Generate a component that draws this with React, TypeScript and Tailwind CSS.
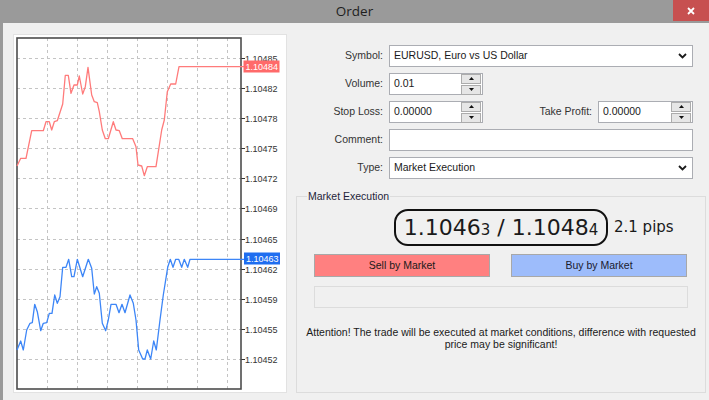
import React from 'react';

const UI_FONT = "font-['Liberation_Sans',Arial,sans-serif]";

const RED_POINTS =
	'17,166 20.7,158.3 26,158.3 31.7,130.7 43.3,130.7 46,121.7 49.3,121.7 51.7,130 54.3,121.7 57.3,120.7 62.7,104 65.3,75.3 68.3,75.3 71,93.3 74,85 77.3,85 79.3,76 82.7,94 85.3,86.7 88,67.3 91.7,95 94.3,101.7 97.3,102.7 99.3,111.7 102.3,130 105.3,138.7 108.3,138.7 113.3,121.7 116,130 119.3,130.7 122.3,138.7 132.7,138.7 136,146.7 138,165 141.7,166 144.3,175.7 147.3,166.7 156,166.7 161.7,130 164.3,120 167.3,91.7 170.7,84 175.7,84 179,66.7 244,66.7';

const BLUE_POINTS =
	'17,350 20.7,341 23.3,350 26.7,330 30,323.3 32.3,322.7 34.7,304.3 37.3,311.7 40.7,330.7 43.3,323.3 46.7,322.7 49.3,313.3 52,313.3 54.7,295 57.3,303.3 60,296.7 62.7,267.3 66,267.3 68.7,259.3 71.7,276.7 74,276.7 77.3,259.3 82.7,276.7 88.3,259.3 91.7,268.3 94.3,294 96.7,286.7 99.3,293.3 102.3,323.3 105.7,330.7 108.3,320 111,304.3 116,304.3 119,312.7 122,304.3 125,312.7 130,295 133.3,303.3 136,320 138.7,350 142.7,359 145,359 147.3,350 150.7,359 153.7,341 156.3,350 160,320 163.3,295 167.7,267.3 170.3,259.3 173,267.3 175.7,259.3 178.7,259.3 181.7,267.3 184.3,259.3 187.7,267.3 190,259.3 244,259.3';

const GRID_X = [47, 77, 107, 137, 167, 197, 227];

const PRICE_LEVELS = [
	{ y: 58, label: '1.10485' },
	{ y: 88, label: '1.10482' },
	{ y: 118, label: '1.10478' },
	{ y: 148, label: '1.10475' },
	{ y: 178, label: '1.10472' },
	{ y: 208, label: '1.10469' },
	{ y: 239, label: '1.10465' },
	{ y: 269, label: '1.10462' },
	{ y: 299, label: '1.10459' },
	{ y: 329, label: '1.10455' },
	{ y: 359, label: '1.10452' },
];

// tick chart, drawn in page coordinates via the viewBox
const TickChart = () => (
	<svg width={272} height={357} viewBox="14 35 272 357" className="block">
		{GRID_X.map(x => (
			<line
				key={x}
				x1={x + 0.5}
				y1={38}
				x2={x + 0.5}
				y2={389}
				stroke="#c4c4c4"
				strokeWidth={1}
				strokeDasharray="3 3"
			/>
		))}
		{PRICE_LEVELS.map(level => (
			<g key={level.label}>
				<line
					x1={17}
					y1={level.y + 0.5}
					x2={241}
					y2={level.y + 0.5}
					stroke="#c4c4c4"
					strokeWidth={1}
					strokeDasharray="3 3"
				/>
				<line x1={241} y1={level.y + 0.5} x2={245} y2={level.y + 0.5} stroke="#333" strokeWidth={1} />
				<text
					x={245}
					y={level.y + 3.5}
					fontSize={9}
					fill="#333"
					fontFamily="'Liberation Sans', Arial, sans-serif"
				>
					{level.label}
				</text>
			</g>
		))}
		<rect x={17} y={38} width={224} height={351} fill="none" stroke="#4d4d4d" strokeWidth={1.6} />
		<polyline points={RED_POINTS} fill="none" stroke="#ff7b7b" strokeWidth={1.3} strokeLinejoin="round" />
		<polyline points={BLUE_POINTS} fill="none" stroke="#3d86f7" strokeWidth={1.3} strokeLinejoin="round" />
		<rect x={243.5} y={60.5} width={36} height={12} fill="#ff6a6a" />
		<text x={245.5} y={70} fontSize={9} fill="#fff" fontFamily="'Liberation Sans', Arial, sans-serif">
			1.10484
		</text>
		<rect x={244} y={252.5} width={36} height={12} fill="#1f6ef0" />
		<text x={246} y={262} fontSize={9} fill="#fff" fontFamily="'Liberation Sans', Arial, sans-serif">
			1.10463
		</text>
	</svg>
);

const Chevron = () => (
	<svg width={9} height={6} viewBox="0 0 9 6" className="shrink-0">
		<path d="M1 1l3.5 3.5L8 1" fill="none" stroke="#1a1a1a" strokeWidth={1.8} />
	</svg>
);

const Select = ({ value }: { value: string }) => (
	<div className="flex h-[22px] w-[304px] items-center justify-between border border-[#abadb3] bg-white pl-[4px] pr-[5px] text-[#1a1a1a]">
		<span>{value}</span>
		<Chevron />
	</div>
);

const SpinButton = ({ up }: { up?: boolean }) => (
	<div className="flex h-[10px] items-center justify-center border border-[#acacac] bg-[#e6e6e6]">
		<svg width={5} height={3} viewBox="0 0 5 3">
			<path d={up ? 'M0 3L2.5 0L5 3Z' : 'M0 0L2.5 3L5 0Z'} fill="#111" />
		</svg>
	</div>
);

const NumberInput = ({ value, width }: { value: string; width: string }) => (
	<div className={`flex h-[22px] ${width} shrink-0 items-center border border-[#abadb3] bg-white pl-[4px] pr-px text-[#1a1a1a]`}>
		<span className="flex-1">{value}</span>
		<div className="flex w-[20px] flex-col gap-px">
			<SpinButton up />
			<SpinButton />
		</div>
	</div>
);

const FieldLabel = ({ children }: { children: React.ReactNode }) => (
	<span className="w-[93px] shrink-0 pr-[6px] text-right text-[#333]">{children}</span>
);

const OrderForm = () => (
	<div className="flex w-[397px] flex-col gap-[6px] pt-[11px]">
		<div className="flex items-center">
			<FieldLabel>Symbol:</FieldLabel>
			<Select value="EURUSD, Euro vs US Dollar" />
		</div>
		<div className="flex items-center">
			<FieldLabel>Volume:</FieldLabel>
			<NumberInput value="0.01" width="w-[94px]" />
		</div>
		<div className="flex items-center">
			<FieldLabel>Stop Loss:</FieldLabel>
			<NumberInput value="0.00000" width="w-[94px]" />
			<span className="flex-1 pr-[6px] text-right text-[#333]">Take Profit:</span>
			<NumberInput value="0.00000" width="w-[95px]" />
		</div>
		<div className="flex items-center">
			<FieldLabel>Comment:</FieldLabel>
			<div className="h-[22px] w-[304px] border border-[#abadb3] bg-white" />
		</div>
		<div className="flex items-center">
			<FieldLabel>Type:</FieldLabel>
			<Select value="Market Execution" />
		</div>
	</div>
);

const MarketExecution = () => (
	<div className="relative mt-[17px] h-[197px] w-[410px] border border-[#dcdcdc]">
		<span className="absolute -top-[8px] left-[10px] bg-[#f0f0f0] px-px text-[#1f1f3a]">Market Execution</span>
		<div className="mt-[12px] grid grid-cols-[1fr_auto_1fr] items-center">
			<div />
			<div className="flex h-[37px] w-[214px] items-center justify-center rounded-[14px] border-2 border-[#111] font-['DejaVu_Sans',sans-serif] text-[22px] leading-none text-[#1a1a1a]">
				<span>
					1.1046<span className="text-[15px]">3</span> / 1.1048<span className="text-[15px]">4</span>
				</span>
			</div>
			<span className="pl-[6px] font-['DejaVu_Sans',sans-serif] text-[15px] text-[#1a1a1a]">2.1 pips</span>
		</div>
		<div className="mt-[8px] flex gap-[21px] px-[17px]">
			<button className="h-[23px] w-[176px] border border-[#a8a8a8] bg-[#ff8080] text-[#1a1a1a]">Sell by Market</button>
			<button className="h-[23px] w-[176px] border border-[#a8a8a8] bg-[#9dbcfb] text-[#1a1a2e]">Buy by Market</button>
		</div>
		<div className="mx-[17px] mt-[9px] h-[22px] border border-[#dcdcdc] bg-[#f0f0f0]" />
		<p className="mt-[18px] whitespace-nowrap text-center leading-[12px] text-[#1a1a1a]">
			Attention! The trade will be executed at market conditions, difference with requested
			<br />
			price may be significant!
		</p>
	</div>
);

const App = () => {
	return (
		<div className={`flex h-[400px] w-[709px] flex-col overflow-hidden bg-[#9a9a9a] text-[10.5px] ${UI_FONT}`}>
			<div className="relative flex h-[23px] shrink-0 items-center justify-center">
				<span className="font-['Open_Sans',sans-serif] text-[13.5px] text-[#1e1e1e]">Order</span>
				<div className="absolute right-0 top-0 flex h-[21px] w-[36px] items-center justify-center bg-[#c75050]">
					<svg width={8} height={8} viewBox="0 0 8 8">
						<path d="M1 1l6 6M7 1L1 7" stroke="#fff" strokeWidth={1.8} />
					</svg>
				</div>
			</div>
			<div className="ml-[3px] flex flex-1 gap-[9px] bg-[#f0f0f0] pl-[10px] pt-[11px]">
				<div className="h-[359px] w-[274px] border border-[#e2e2e2] bg-white">
					<TickChart />
				</div>
				<div className="flex flex-col">
					<OrderForm />
					<MarketExecution />
				</div>
			</div>
		</div>
	);
};

export default App;
